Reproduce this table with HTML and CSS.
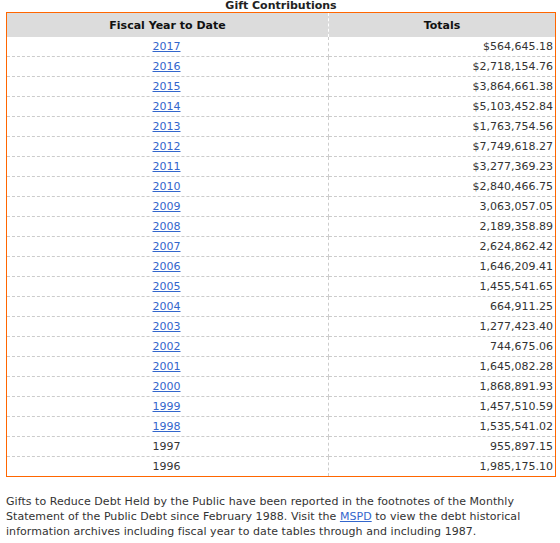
FILE: index.html
```html
<!DOCTYPE html>
<html>
<head>
<meta charset="utf-8">
<link rel="stylesheet" href="styles.css">
</head>
<body>
<div class="title">Gift Contributions</div>
<table class="gifts">
  <thead>
    <tr><th class="c-year">Fiscal Year to Date</th><th class="c-total">Totals</th></tr>
  </thead>
  <tbody>
    <tr><td class="c-year"><a href="#">2017</a></td><td class="c-total">$564,645.18</td></tr>
    <tr><td class="c-year"><a href="#">2016</a></td><td class="c-total">$2,718,154.76</td></tr>
    <tr><td class="c-year"><a href="#">2015</a></td><td class="c-total">$3,864,661.38</td></tr>
    <tr><td class="c-year"><a href="#">2014</a></td><td class="c-total">$5,103,452.84</td></tr>
    <tr><td class="c-year"><a href="#">2013</a></td><td class="c-total">$1,763,754.56</td></tr>
    <tr><td class="c-year"><a href="#">2012</a></td><td class="c-total">$7,749,618.27</td></tr>
    <tr><td class="c-year"><a href="#">2011</a></td><td class="c-total">$3,277,369.23</td></tr>
    <tr><td class="c-year"><a href="#">2010</a></td><td class="c-total">$2,840,466.75</td></tr>
    <tr><td class="c-year"><a href="#">2009</a></td><td class="c-total">3,063,057.05</td></tr>
    <tr><td class="c-year"><a href="#">2008</a></td><td class="c-total">2,189,358.89</td></tr>
    <tr><td class="c-year"><a href="#">2007</a></td><td class="c-total">2,624,862.42</td></tr>
    <tr><td class="c-year"><a href="#">2006</a></td><td class="c-total">1,646,209.41</td></tr>
    <tr><td class="c-year"><a href="#">2005</a></td><td class="c-total">1,455,541.65</td></tr>
    <tr><td class="c-year"><a href="#">2004</a></td><td class="c-total">664,911.25</td></tr>
    <tr><td class="c-year"><a href="#">2003</a></td><td class="c-total">1,277,423.40</td></tr>
    <tr><td class="c-year"><a href="#">2002</a></td><td class="c-total">744,675.06</td></tr>
    <tr><td class="c-year"><a href="#">2001</a></td><td class="c-total">1,645,082.28</td></tr>
    <tr><td class="c-year"><a href="#">2000</a></td><td class="c-total">1,868,891.93</td></tr>
    <tr><td class="c-year"><a href="#">1999</a></td><td class="c-total">1,457,510.59</td></tr>
    <tr><td class="c-year"><a href="#">1998</a></td><td class="c-total">1,535,541.02</td></tr>
    <tr><td class="c-year">1997</td><td class="c-total">955,897.15</td></tr>
    <tr><td class="c-year">1996</td><td class="c-total">1,985,175.10</td></tr>
  </tbody>
</table>
<p class="note">Gifts to Reduce Debt Held by the Public have been reported in the footnotes of the Monthly Statement of the Public Debt since February 1988. Visit the <a href="#">MSPD</a> to view the debt historical information archives including fiscal year to date tables through and including 1987.</p>
</body>
</html>
```
FILE: styles.css
```css
html, body {
  margin: 0;
  padding: 0;
  background: #fff;
}
body {
  padding: 0 5px 0 6px;
  font-family: "DejaVu Sans", Verdana, sans-serif;
  font-size: 11px;
  color: #333;
}
.title {
  width: 550px;
  text-align: center;
  font-weight: bold;
  font-size: 11px;
  line-height: 12px;
  height: 12px;
  color: #222;
}
.gifts {
  width: 550px;
  border-collapse: collapse;
  border: 1px solid #ff6600;
}
.gifts th {
  background: #dcdcdc;
  font-weight: bold;
  font-size: 11px;
  height: 24px;
  padding: 0;
  text-align: center;
  color: #111;
}
.gifts th.c-year {
  border-right: 1px dashed #fff;
}
.gifts td {
  height: 19px;
  padding: 0 2px 0 0;
  border-bottom: 1px dashed #cccccc;
}
.gifts td.c-year {
  width: 319px;
  text-align: center;
  border-right: 1px dashed #cccccc;
}
.gifts td.c-total {
  text-align: right;
}
.gifts tr:last-child td {
  border-bottom: none;
}
.gifts a, .note a {
  color: #3366cc;
  text-decoration: underline;
}
.note {
  margin: 17px 0 0 0;
  font-size: 11px;
  line-height: 15px;
  letter-spacing: 0.05px;
  width: 550px;
}
```
